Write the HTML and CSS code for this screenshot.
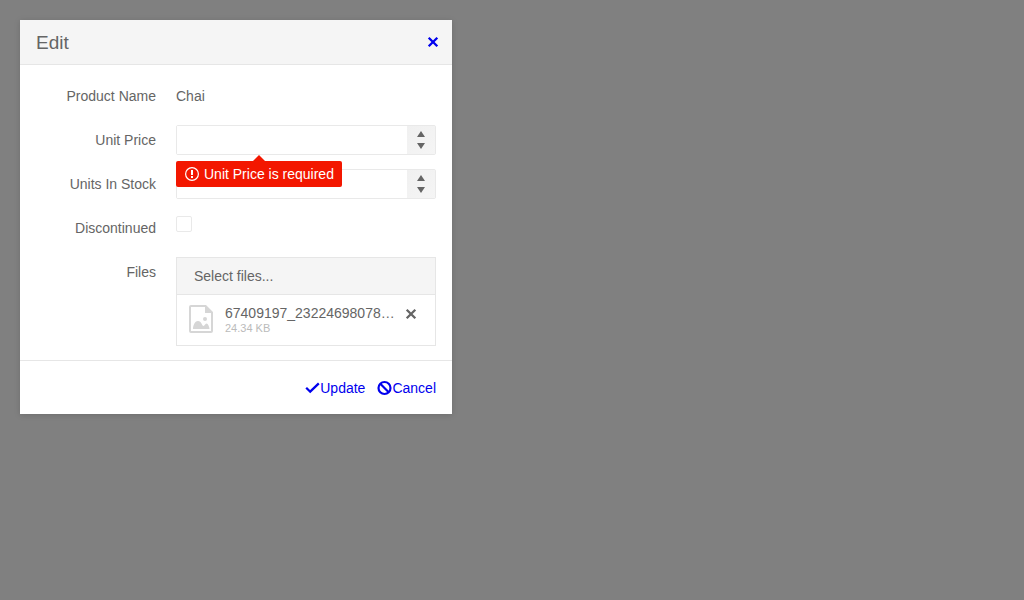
FILE: index.html
```html
<!DOCTYPE html>
<html lang="en">
<head>
<meta charset="utf-8">
<meta name="viewport" content="width=device-width, initial-scale=1">
<title>Edit</title>
<link rel="stylesheet" href="styles.css">
</head>
<body>
<form class="dialog" role="dialog" aria-labelledby="dialog-title">
  <header class="dialog-header">
    <h1 class="dialog-title" id="dialog-title">Edit</h1>
    <a class="dialog-close" href="#" aria-label="Close">
      <svg class="icon" viewBox="0 0 16 16" aria-hidden="true"><path d="M3.700 3.700l8.600 8.600M12.300 3.700l-8.600 8.600" fill="none" stroke="currentColor" stroke-width="2.300"/></svg>
    </a>
  </header>
  <div class="fields">
    <span class="label">Product Name</span>
    <span class="value">Chai</span>

    <label class="label" for="price">Unit Price</label>
    <div class="numeric">
      <input class="numeric-input" id="price" type="text" inputmode="decimal" aria-describedby="price-error">
      <div class="spinner">
        <button class="spin spin-up" type="button" aria-label="Increase price"><svg class="arrow" viewBox="0 0 8 6" aria-hidden="true"><path d="M4 0l4 6H0z" fill="currentColor"/></svg></button>
        <button class="spin spin-down" type="button" aria-label="Decrease price"><svg class="arrow" viewBox="0 0 8 6" aria-hidden="true"><path d="M0 0h8L4 6z" fill="currentColor"/></svg></button>
      </div>
      <div class="error" id="price-error" role="alert">
        <svg class="error-icon" viewBox="0 0 14 14" aria-hidden="true"><circle cx="7" cy="7" r="6.4" fill="none" stroke="currentColor" stroke-width="1.2"/><path d="M6 3h2v5H6zM6 9h2v2H6z" fill="currentColor"/></svg>
        <span>Unit Price is required</span>
      </div>
    </div>

    <label class="label" for="stock">Units In Stock</label>
    <div class="numeric">
      <input class="numeric-input" id="stock" type="text" inputmode="numeric">
      <div class="spinner">
        <button class="spin spin-up" type="button" aria-label="Increase stock"><svg class="arrow" viewBox="0 0 8 6" aria-hidden="true"><path d="M4 0l4 6H0z" fill="currentColor"/></svg></button>
        <button class="spin spin-down" type="button" aria-label="Decrease stock"><svg class="arrow" viewBox="0 0 8 6" aria-hidden="true"><path d="M0 0h8L4 6z" fill="currentColor"/></svg></button>
      </div>
    </div>

    <label class="label" for="discontinued">Discontinued</label>
    <div class="check-cell"><input class="check" id="discontinued" type="checkbox"></div>

    <label class="label" for="files">Files</label>
    <div class="upload">
      <button class="upload-button" id="files" type="button">Select files...</button>
      <div class="file">
        <svg class="file-icon" viewBox="0 0 24 28" aria-hidden="true"><path d="M2 0h15l7 7v19a2 2 0 0 1-2 2H2a2 2 0 0 1-2-2V2a2 2 0 0 1 2-2zm0 2v24h20V8h-6V2z" fill="currentColor" fill-rule="evenodd"/><circle cx="16" cy="14" r="2" fill="currentColor"/><path d="M4 24c0-3 1.500-8 5-8 3.500 0 4 5 5.500 5 1.200 0 1.500-2.500 3-2.500S20.500 22 20.500 24z" fill="currentColor"/></svg>
        <div class="file-text">
          <span class="file-name">67409197_23224698078…</span>
          <span class="file-size">24.34 KB</span>
        </div>
        <button class="file-remove" type="button" aria-label="Remove file"><svg class="icon" viewBox="0 0 16 16" aria-hidden="true"><path d="M3.700 3.700l8.600 8.600M12.300 3.700l-8.600 8.600" fill="none" stroke="currentColor" stroke-width="2.300"/></svg></button>
      </div>
    </div>
  </div>
  <footer class="actions">
    <a class="action" href="#"><svg class="icon" viewBox="0 0 16 16" aria-hidden="true"><path d="M2.200 7.800l4 3.900 8.600-8.300" fill="none" stroke="currentColor" stroke-width="2.300"/></svg>Update</a>
    <a class="action" href="#"><svg class="icon" viewBox="0 0 16 16" aria-hidden="true"><circle cx="8.500" cy="8" r="6" fill="none" stroke="currentColor" stroke-width="2.200"/><path d="M4.300 3.800l8.400 8.400" stroke="currentColor" stroke-width="2.200"/></svg>Cancel</a>
  </footer>
</form>
</body>
</html>
```

FILE: styles.css
```css
* {
  box-sizing: border-box;
}

body {
  margin: 0;
  padding: 20px;
  background: #808080;
  color: #656565;
  font: 14px/20px "Liberation Sans", Arial, sans-serif;
}

button,
input {
  margin: 0;
  padding: 0;
  border: 0;
  color: inherit;
  font: inherit;
}

button {
  cursor: pointer;
}

a {
  color: #0000ee;
  text-decoration: none;
}

.icon {
  display: block;
  width: 16px;
  height: 16px;
}

.dialog {
  max-width: 432px;
  background: #fff;
  box-shadow: 0 1px 6px rgba(0, 0, 0, 0.15);
}

.dialog-header {
  display: flex;
  align-items: center;
  justify-content: space-between;
  padding: 9px 11px 9px 16px;
  border-bottom: 1px solid #e6e6e6;
  background: #f5f5f5;
}

.dialog-title {
  margin: 0;
  padding-top: 2px;
  font-size: 19px;
  font-weight: 400;
  line-height: 24px;
}

.fields {
  display: grid;
  grid-template-columns: 120px minmax(0, 1fr);
  gap: 14px 20px;
  padding: 16px 16px 14px;
}

.label {
  line-height: 30px;
  text-align: right;
}

.value {
  line-height: 30px;
}

.numeric {
  position: relative;
  display: flex;
  height: 30px;
  border: 1px solid #e9e9e9;
  border-radius: 2px;
}

.numeric-input {
  flex: 1;
  min-width: 0;
  padding: 0 8px;
  background: #fff;
  outline: 0;
}

.spinner {
  display: flex;
  flex-direction: column;
  width: 28px;
  background: linear-gradient(to bottom right, #f0f0f0, #f5f5f5);
}

.spin {
  display: flex;
  flex: 1;
  justify-content: center;
  background: none;
}

.spin-up {
  align-items: flex-end;
  padding-bottom: 3px;
}

.spin-down {
  align-items: flex-start;
  padding-top: 3px;
}

.arrow {
  display: block;
  width: 8px;
  height: 6px;
}

.error {
  position: absolute;
  z-index: 1;
  top: 35px;
  left: -1px;
  display: flex;
  align-items: center;
  gap: 5px;
  padding: 3px 8px 3px 9px;
  border-radius: 2px;
  background: #f31700;
  color: #fff;
  white-space: nowrap;
}

.error::before {
  content: "";
  position: absolute;
  bottom: 100%;
  left: 50%;
  margin-left: -6px;
  border: 6px solid transparent;
  border-top: 0;
  border-bottom-color: #f31700;
}

.error-icon {
  width: 14px;
  height: 14px;
}

.check-cell {
  height: 30px;
  padding-top: 3px;
}

.check {
  display: block;
  width: 16px;
  height: 16px;
  border: 1px solid #e9e9e9;
  border-radius: 2px;
  background: #fff;
  appearance: none;
}

.check:checked {
  background: #656565;
}

.upload {
  border: 1px solid #e6e6e6;
}

.upload-button {
  display: block;
  width: 100%;
  padding: 8px 17px;
  background: #f5f5f5;
  text-align: left;
}

.file {
  display: flex;
  align-items: flex-start;
  padding: 10px 16px 10px 12px;
  border-top: 1px solid #e6e6e6;
}

.file-icon {
  flex: none;
  width: 24px;
  height: 28px;
  color: #d6d6d6;
}

.file-text {
  flex: 1;
  min-width: 0;
  margin-left: 12px;
}

.file-name,
.file-size {
  display: block;
  white-space: nowrap;
}

.file-name {
  line-height: 16px;
}

.file-size {
  color: #bbb;
  font-size: 11px;
  line-height: 14px;
}

.file-remove {
  flex: none;
  margin-left: 4px;
  padding-top: 1px;
  background: none;
}

.actions {
  display: flex;
  justify-content: flex-end;
  gap: 11px;
  padding: 17px 16px 16px;
  border-top: 1px solid #e6e6e6;
}

.action {
  display: flex;
  align-items: center;
}
```
